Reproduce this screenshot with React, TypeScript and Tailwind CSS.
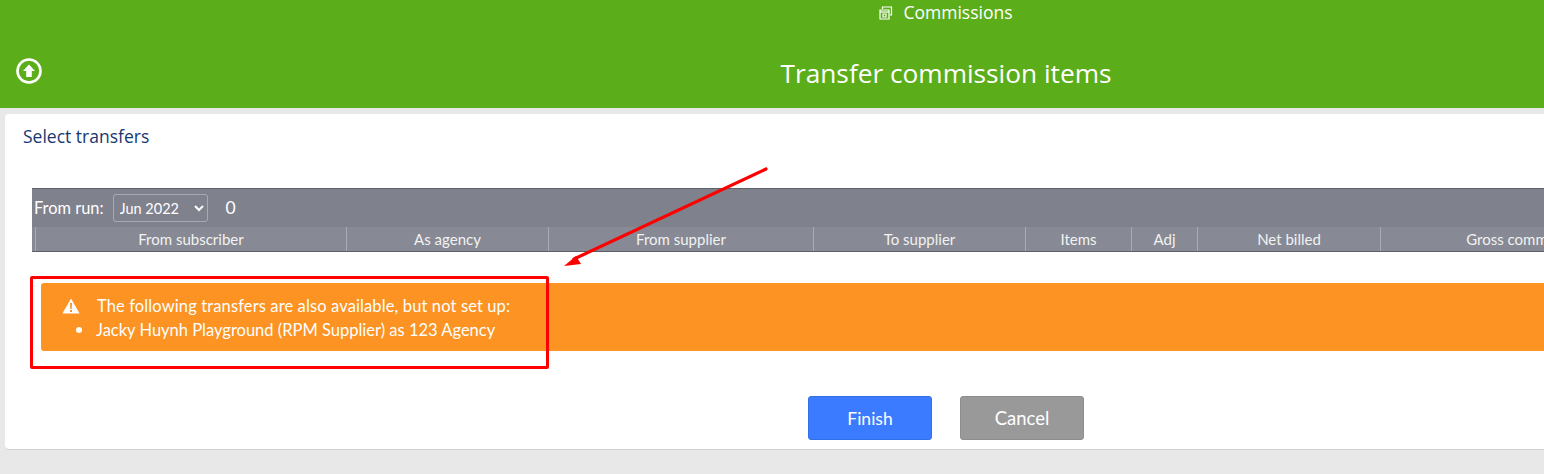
const bodyFont = "font-['Lato',sans-serif]";

const columns = [
    { label: "From subscriber", width: "w-[311px]" },
    { label: "As agency", width: "w-[202px]" },
    { label: "From supplier", width: "w-[265px]" },
    { label: "To supplier", width: "w-[212px]" },
    { label: "Items", width: "w-[106px]" },
    { label: "Adj", width: "w-[66px]" },
    { label: "Net billed", width: "w-[183px]" },
    { label: "Gross commission", width: "w-[290px]" },
];

const App = () => {
    return (
        <div className="relative w-[1544px] h-[474px] overflow-hidden bg-[#e8e8e8]">
            <div className="w-[1892px]">
                {/* Green header */}
                <header className="bg-[#5bae1a] h-[108px] text-white font-['Open_Sans',sans-serif]">
                    <div className="flex h-[25px] items-center justify-center gap-[10px] text-[17.5px]">
                        <svg width="14" height="14" viewBox="0 0 14 14" fill="none" stroke="white" strokeWidth="1.2">
                            <path d="M3.5 3V1h9v8h-2" />
                            <path d="M1 4h9v9H1z" />
                            <path d="M1 6h9" />
                            <path d="M4 8h3v3H4z" />
                        </svg>
                        <span>Commissions</span>
                    </div>
                    <div className="grid grid-cols-[1fr_auto_1fr] items-center h-[48px] mt-[25px]">
                        <div className="pl-4 flex">
                            <svg width="26" height="26" viewBox="0 0 26 26" className="mb-[6px]">
                                <circle cx="13" cy="13" r="11.5" fill="none" stroke="white" strokeWidth="2.6" />
                                <path d="M13 6.5 19 13h-3.2v6h-5.6v-6H7z" fill="white" />
                            </svg>
                        </div>
                        <h1 className="text-[26.25px]">Transfer commission items</h1>
                        <div />
                    </div>
                </header>

                {/* Main card */}
                <main className={`bg-white mx-[5px] mt-[6px] h-[336px] rounded-[4px] border-b border-[#d0d0d0] ${bodyFont}`}>
                    <h2 className="pl-[18px] pt-[10px] text-[17.5px] leading-[24px] text-[#16386e] font-['Open_Sans',sans-serif]">Select transfers</h2>

                    <div className="ml-[27px] mr-[8px] mt-[40px] border-t border-b border-t-[#5f5f66] border-b-[#5f5f66] text-white">
                        <div className="bg-[#7f818d] h-[38px] flex items-center pl-[2px] text-[16.4px]">
                            <span>From run:</span>
                            <select defaultValue="Jun 2022" className="ml-[9px] w-[95px] h-[28px] rounded-[3px] border border-[#a8aab2] bg-transparent pl-[2px] text-[14.5px] outline-none">
                                <option className="text-black">Jun 2022</option>
                            </select>
                            <span className="ml-[18px] text-[17.5px]">0</span>
                        </div>
                        <div className="bg-[#878994] h-[24px] flex pl-[3px] text-[15px] leading-[24px] text-[#f2f2f2]">
                            {columns.map((col) => (
                                <div key={col.label} className={`${col.width} text-center border-l border-[#a9abb3] shrink-0`}>{col.label}</div>
                            ))}
                        </div>
                    </div>

                    {/* Warning */}
                    <div className="ml-[36px] mr-[8px] mt-[31px] h-[68px] bg-[#fc9322] rounded-[3px] text-white text-[16.5px] pl-[21px] pt-[11px] leading-[24px]">
                        <div className="flex items-center gap-[17px]">
                            <svg width="18" height="16" viewBox="0 0 18 16">
                                <path d="M9 0.5 17.6 15.5H0.4z" fill="white" />
                                <path d="M8 5h2l-.3 6H8.3zM8 12h2v2H8z" fill="#fc9322" />
                            </svg>
                            <span className="tracking-[0.12px]">The following transfers are also available, but not set up:</span>
                        </div>
                        <div className="flex items-center gap-[14px] pl-[14px]">
                            <span className="w-[6px] h-[6px] rounded-full bg-white" />
                            <span>Jacky Huynh Playground (RPM Supplier) as 123 Agency</span>
                        </div>
                    </div>

                    {/* Actions */}
                    <div className="flex justify-center gap-[28px] mt-[45px]">
                        <button className="w-[124px] h-[44px] pt-[2px] rounded-[3px] bg-[#3b7bff] border border-[#3270e8] text-white text-[17.5px]">Finish</button>
                        <button className="w-[124px] h-[44px] pt-[2px] rounded-[3px] bg-[#999999] border border-[#8d8d8d] text-white text-[18.5px]">Cancel</button>
                    </div>
                </main>
            </div>

            {/* Annotation overlay */}
            <div className="absolute left-[30px] top-[276px] w-[519px] h-[93px] border-[3px] border-[#ff0000] rounded-[2px]" />
            <svg className="absolute left-0 top-0 pointer-events-none" width="1544" height="474">
                <path d="M766 169 574 259" stroke="#ff0000" strokeWidth="3.2" strokeLinecap="round" />
                <path d="M564 266 576 256 581 264z" fill="#ff0000" />
            </svg>
        </div>
    );
};

export default App;
